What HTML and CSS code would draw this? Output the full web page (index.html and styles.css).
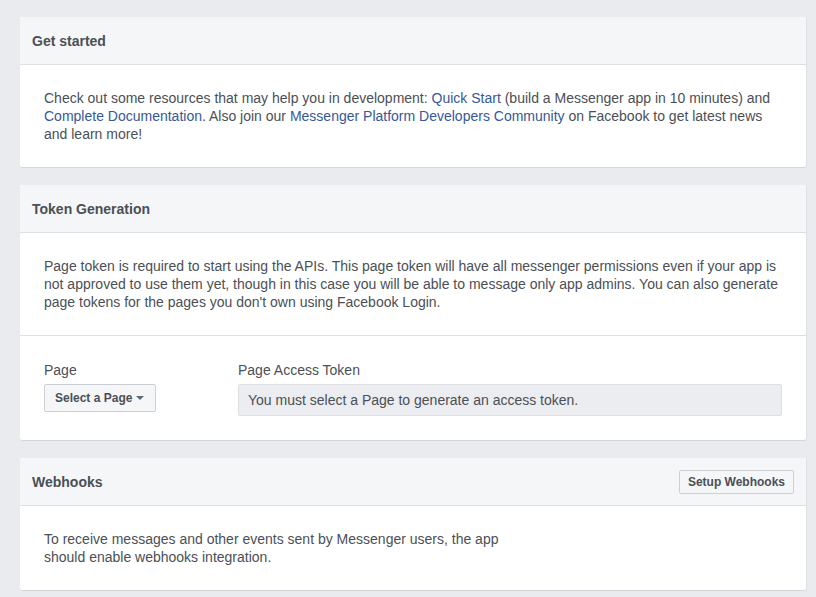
FILE: index.html
```html
<!DOCTYPE html>
<html>
<head>
<meta charset="utf-8">
<link rel="stylesheet" href="styles.css">
</head>
<body>
<div class="page">
  <section class="card">
    <div class="card-head"><h2 class="card-title">Get started</h2></div>
    <div class="card-body">
      <p class="text">Check out some resources that may help you in development: <a class="link" href="#">Quick Start</a> (build a Messenger app in 10 minutes) and <a class="link" href="#">Complete Documentation</a>. Also join our <a class="link" href="#">Messenger Platform Developers Community</a> on Facebook to get latest news and learn more!</p>
    </div>
  </section>

  <section class="card">
    <div class="card-head"><h2 class="card-title">Token Generation</h2></div>
    <div class="card-body">
      <p class="text">Page token is required to start using the APIs. This page token will have all messenger permissions even if your app is not approved to use them yet, though in this case you will be able to message only app admins. You can also generate page tokens for the pages you don't own using Facebook Login.</p>
    </div>
    <div class="card-body form-row">
      <div class="field field-page">
        <div class="label">Page</div>
        <button class="btn btn-select">Select a Page <span class="caret"></span></button>
      </div>
      <div class="field field-token">
        <div class="label">Page Access Token</div>
        <div class="token-box">You must select a Page to generate an access token.</div>
      </div>
    </div>
  </section>

  <section class="card">
    <div class="card-head head-row">
      <h2 class="card-title">Webhooks</h2>
      <button class="btn btn-small">Setup Webhooks</button>
    </div>
    <div class="card-body">
      <p class="text narrow">To receive messages and other events sent by Messenger users, the app should enable webhooks integration.</p>
    </div>
  </section>
</div>
</body>
</html>
```

FILE: styles.css
```css
* { box-sizing: border-box; }
html, body {
  margin: 0;
  padding: 0;
  background: #e9ebee;
  font-family: "Liberation Sans", Arial, Helvetica, sans-serif;
  color: #4b4f56;
  font-size: 14px;
}
.page {
  padding: 17px 9px 0 20px;
  display: flex;
  flex-direction: column;
  gap: 17px;
}
.card {
  background: #fff;
  border-right: 1px solid #dddfe2;
  border-bottom: 1px solid #d3d6db;
  border-radius: 3px;
  width: 787px;
  overflow: hidden;
}
.card-head {
  background: #f5f6f7;
  border-bottom: 1px solid #dddfe2;
  height: 48px;
  padding: 0 12px;
  display: flex;
  align-items: center;
}
.head-row { justify-content: space-between; }
.card-title {
  margin: 0;
  font-size: 14px;
  font-weight: bold;
  color: #4b4f56;
}
.card-body {
  padding: 24px 24px;
}
.text {
  margin: 0;
  line-height: 18px;
}
.narrow { max-width: 470px; }
.link {
  color: #365899;
  text-decoration: none;
}
.form-row {
  border-top: 1px solid #dddfe2;
  display: flex;
  padding-top: 25px;
}
.field-page { width: 194px; flex: none; }
.field-token { flex: 1; }
.label {
  line-height: 18px;
  margin-bottom: 5px;
}
.btn {
  font-family: inherit;
  font-weight: bold;
  font-size: 12px;
  color: #4b4f56;
  background: #f5f6f7;
  border: 1px solid #ccd0d5;
  border-radius: 2px;
  cursor: pointer;
  display: inline-flex;
  align-items: center;
}
.btn-select {
  height: 28px;
  width: 112px;
  padding: 0 10px;
}
.caret {
  display: inline-block;
  width: 0;
  height: 0;
  border-left: 4px solid transparent;
  border-right: 4px solid transparent;
  border-top: 4px solid #606770;
  margin-left: 4px;
}
.btn-small {
  height: 24px;
  padding: 0 8px;
}
.token-box {
  height: 32px;
  background: #ebedf0;
  border: 1px solid #dddfe2;
  border-radius: 2px;
  padding: 0 9px;
  display: flex;
  align-items: center;
  color: #4b4f56;
}
```
